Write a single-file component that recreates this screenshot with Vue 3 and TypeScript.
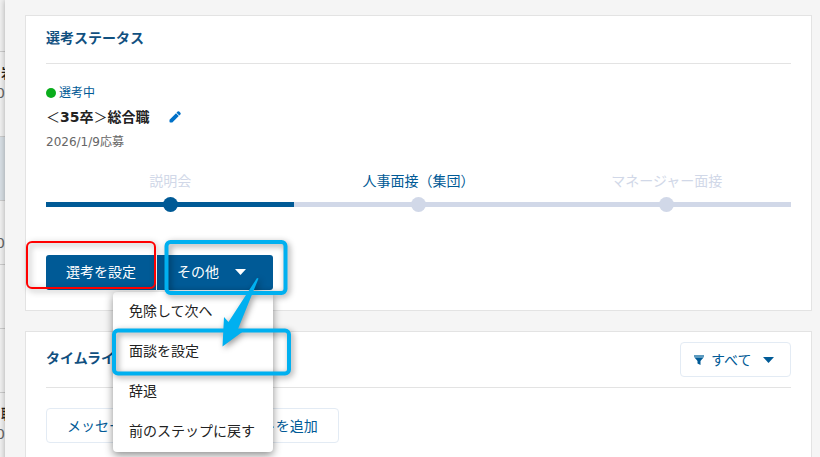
<script setup lang="ts">
import { ref } from 'vue'

interface Step {
  label: string
  done: boolean
  current: boolean
}

const steps: Step[] = [
  { label: '説明会', done: true, current: false },
  { label: '人事面接（集団）', done: false, current: true },
  { label: 'マネージャー面接', done: false, current: false },
]

const menuItems: string[] = ['免除して次へ', '面談を設定', '辞退', '前のステップに戻す']
const menuOpen = ref(true)
const filter = ref('all')
</script>

<template>
  <div class="app">
    <div class="list" aria-hidden="true">
      <div class="row row-first"></div>
      <div class="row row-tall"><b>岩</b><span>0</span></div>
      <div class="row selected"></div>
      <div class="row"><span class="low">0</span></div>
      <div class="row"></div>
      <div class="row"></div>
      <div class="row row-last"><b>職</b><span>0</span></div>
    </div>

    <main class="panel">
      <section class="card">
        <header class="card-header">
          <h2>選考ステータス</h2>
        </header>

        <div class="summary">
          <p class="status"><i class="dot"></i>選考中</p>
          <div class="job">
            <h3><span>＜</span>35卒<span>＞</span>総合職</h3>
            <button class="edit" type="button" aria-label="編集">
              <svg width="12" height="12" viewBox="0 0 12 12">
                <path d="M0.5 8.7 7 2.2 9.8 5 3.300 11.500H1.200Q.5 11.500.5 10.800Z M7.500 1.700 8.600.6Q9.400-.1 10.200.6L11.400 1.800Q12.100 2.600 11.400 3.400L10.300 4.500Z" fill="#0071c8" />
              </svg>
            </button>
          </div>
          <p class="date">2026/1/9応募</p>
        </div>

        <ol class="steps">
          <li v-for="step in steps" :key="step.label" :class="{ done: step.done, current: step.current }">
            <span class="step-label">{{ step.label }}</span>
            <span class="track"><i class="knob"></i></span>
          </li>
        </ol>

        <div class="actions">
          <button class="primary" type="button">選考を設定</button>
          <button class="primary more" type="button" :aria-expanded="menuOpen" @click="menuOpen = !menuOpen">
            その他
            <svg width="11" height="6" viewBox="0 0 11 6"><path d="M0 0H11L5.500 6Z" fill="#fff" /></svg>
          </button>

          <div v-if="menuOpen" class="menu" role="menu">
            <button v-for="item in menuItems" :key="item" type="button" role="menuitem">{{ item }}</button>
          </div>

          <svg class="marks" width="290" height="160" viewBox="0 0 290 160" fill="none" aria-hidden="true">
            <rect x="7" y="7" width="128" height="46" rx="5" stroke="#f00" stroke-width="2" />
            <rect x="146.500" y="7" width="119" height="51" rx="4" stroke="#00b0f0" stroke-width="4" />
            <rect x="94" y="95.500" width="175" height="43" rx="4" stroke="#00b0f0" stroke-width="4" />
            <path d="M237 43 238.500 43.500 218 94 225 95 202.500 111.500 204 82 208.500 87Z" fill="#00b0f0" />
          </svg>
        </div>
      </section>

      <section class="card timeline">
        <header class="card-header">
          <h2>タイムライン</h2>
          <label class="filter">
            <svg width="10" height="10" viewBox="0 0 10 10">
              <path d="M0 0H10V2L8.500 3.500H1.500L0 2Z" fill="#5c9abf" />
              <path d="M1 3H9L6.500 6V10L3.500 8.500V6Z" fill="#005a96" />
            </svg>
            <select v-model="filter" aria-label="表示する項目">
              <option value="all">すべて</option>
            </select>
            <svg width="11" height="6" viewBox="0 0 11 6"><path d="M0 0H11L5.500 6Z" fill="#005a96" /></svg>
          </label>
        </header>
        <div class="posts">
          <button type="button">メッセージ作成</button>
          <button type="button">コメントを追加</button>
        </div>
      </section>
    </main>
  </div>
</template>

<style>
body {
  overflow: hidden;
}
</style>

<style scoped>
.app {
  display: grid;
  grid-template-columns: 5px 1fr;
  height: 100vh;
  overflow: hidden;
  color: #222;
  font: 14px/24px "DejaVu Sans", "Noto Sans CJK JP", sans-serif;
}

.app * {
  box-sizing: border-box;
}

button,
select {
  margin: 0;
  padding: 0;
  border: 0;
  background: none;
  color: inherit;
  font: inherit;
  cursor: pointer;
}

h2,
h3,
p,
ol {
  margin: 0;
  padding: 0;
  font-size: 14px;
}

.list {
  display: flex;
  flex-direction: column;
  overflow: hidden;
  background: #f1f1f1;
}

.row {
  display: flex;
  flex: none;
  flex-direction: column;
  height: 64px;
  border-bottom: 1px solid #ccc;
  line-height: 20px;
}

.row b {
  padding: 11px 0 0 1px;
  font-weight: 500;
}

.row span {
  margin-left: -4px;
  color: #666;
}

.row .low {
  margin-top: 32px;
}

.row-first {
  height: 52px;
}

.row-tall {
  height: 85px;
}

.row-last {
  border: 0;
}

.selected {
  background: #d8dfe5;
}

.panel {
  position: relative;
  display: flex;
  flex-direction: column;
  gap: 20px;
  min-width: 0;
  padding: 15px 8px 0 20px;
  background: #f5f5f5;
  box-shadow: 0 0 6px rgba(0, 0, 0, 0.3);
}

.card {
  flex: none;
  padding: 0 20px 20px;
  border: 1px solid #e3e3e3;
  background: #fff;
}

.card-header {
  display: flex;
  align-items: center;
  justify-content: space-between;
  min-height: 48px;
  border-bottom: 1px solid #e3e3e3;
}

.card-header h2 {
  padding-bottom: 3px;
  color: #11507f;
  font-weight: 700;
}

.summary {
  padding: 17px 0 15px;
}

.status {
  display: flex;
  align-items: center;
  gap: 3px;
  color: #005a96;
  font-size: 12px;
}

.dot {
  width: 10px;
  height: 10px;
  border-radius: 50%;
  background: #0aad1c;
}

.job {
  display: flex;
  align-items: center;
  gap: 20px;
}

.job h3 {
  font-weight: 700;
}

.job h3 span {
  font-weight: 400;
}

.edit {
  display: flex;
}

.date {
  padding-top: 1px;
  color: #666;
  font-size: 12px;
}

.steps {
  display: flex;
  list-style: none;
}

.steps li {
  display: flex;
  flex: 1;
  flex-direction: column;
  align-items: center;
  gap: 4px;
  color: #d1d8e8;
}

.steps .current {
  color: #005a96;
}

.track {
  display: flex;
  align-items: center;
  justify-content: center;
  width: 100%;
  height: 5px;
  margin: 5px 0;
  background: #d1d8e8;
}

.knob {
  flex: none;
  width: 15px;
  height: 15px;
  border-radius: 50%;
  background: #d1d8e8;
}

.done .track,
.done .knob {
  background: #005a96;
}

.actions {
  position: relative;
  display: flex;
  gap: 1px;
  width: fit-content;
  margin-top: 43px;
}

.primary {
  height: 35px;
  padding: 0 20px 2px;
  border-radius: 3px 0 0 3px;
  background: #005a96;
  color: #fff;
}

.more {
  display: flex;
  align-items: center;
  gap: 16px;
  padding: 0 27px 2px 20px;
  border-radius: 0 3px 3px 0;
}

.menu {
  position: absolute;
  z-index: 2;
  top: 37px;
  right: 0;
  display: flex;
  flex-direction: column;
  width: 160px;
  border-radius: 4px;
  background: #fff;
  box-shadow: 0 3px 8px rgba(0, 0, 0, 0.45);
}

.menu button {
  height: 40px;
  padding: 0 16px 2px;
  text-align: left;
}

.marks {
  position: absolute;
  z-index: 3;
  top: -20px;
  left: -26px;
  pointer-events: none;
  filter: drop-shadow(2px 2px 3px rgba(0, 0, 0, 0.4));
}

.timeline {
  flex: 1 0 auto;
  border-bottom: 0;
}

.timeline .card-header {
  padding: 10px 0;
}

.filter {
  display: flex;
  align-items: center;
  height: 35px;
  padding: 0 16px 0 13px;
  border: 1px solid #e3ebf4;
  border-radius: 4px;
  color: #005a96;
}

.filter select {
  margin: 0 10px 0 7px;
  appearance: none;
}

.posts {
  display: flex;
  gap: 13px;
  padding-top: 20px;
}

.posts button {
  height: 35px;
  padding: 0 20px;
  border: 1px solid #e3ebf4;
  border-radius: 4px;
  color: #005a96;
}
</style>
